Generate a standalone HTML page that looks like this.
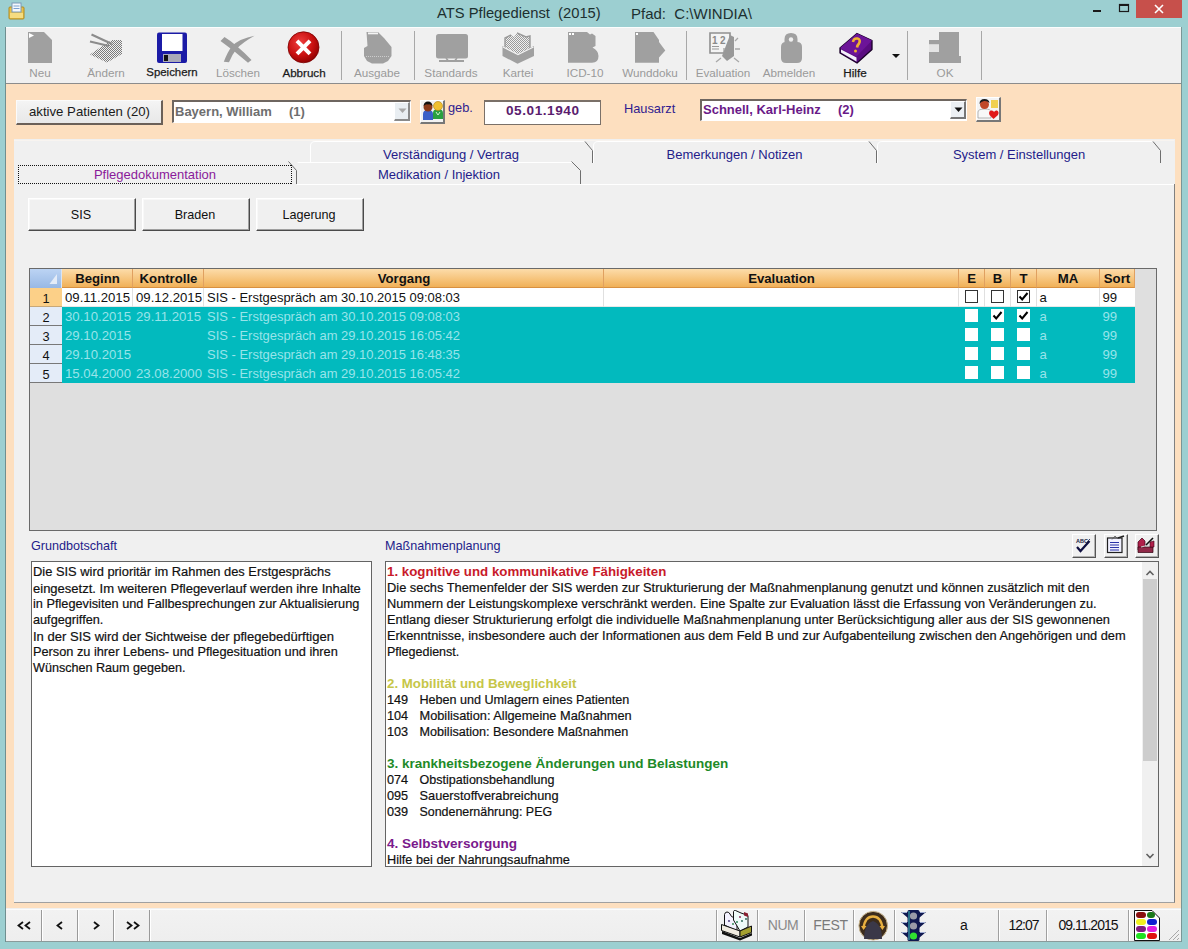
<!DOCTYPE html>
<html><head><meta charset="utf-8">
<style>
*{margin:0;padding:0;box-sizing:border-box}
html,body{width:1188px;height:949px;overflow:hidden}
body{background:#9ccfd1;font-family:"Liberation Sans",sans-serif;position:relative;color:#000}
.a{position:absolute}
.t{position:absolute;white-space:pre;line-height:1}
#title{left:0;top:0;width:1188px;height:27px;background:#9ccfd1}
#toolbar{left:6px;top:27px;width:1175px;height:57px;background:#f0f0f0;border-bottom:1px solid #8c8c8c}
#peach{left:6px;top:84px;width:1175px;height:824px;background:#fddfbf}
#page{left:14px;top:184px;width:1161px;height:719px;background:#f0f0f0;border-right:1px solid #808080;border-bottom:1px solid #a0a0a0}
#tabarea{left:14px;top:139px;width:1161px;height:45px;background:#f0f0f0}
#status{left:6px;top:908px;width:1175px;height:34px;background:#f0f0f0}
.tl{font-size:11.7px;color:#9a9a9a;text-align:center;width:66px}
.tl.on{color:#1a1a1a}
.m{font-size:12.95px;color:#111;-webkit-text-stroke:0.2px #111}
.btn{background:#f0f0f0;border-top:1px solid #fff;border-left:1px solid #fff;border-right:1px solid #4a4a4a;border-bottom:1px solid #4a4a4a;box-shadow:inset -1px -1px 0 #a0a0a0, inset 1px 1px 0 #f8f8f8}
.sep{position:absolute;top:31px;width:1px;height:49px;background:#b4b4b4;border-right:1px solid #fff}
</style></head><body>
<!-- title bar -->
<div id="title" class="a"></div>
<div class="t" style="left:437px;top:6px;font-size:14.75px;color:#1c3030">ATS Pflegedienst  (2015)</div>
<div class="t" style="left:631px;top:6px;font-size:15px;color:#1c3030">Pfad:  C:\WINDIA\</div>
<div class="a" style="left:1136px;top:0;width:46px;height:18px;background:#c7504b"></div>

<div id="toolbar" class="a"></div>
<div id="peach" class="a"></div>
<div id="tabarea" class="a"></div>
<div id="page" class="a"></div>
<div id="status" class="a"></div>


<!-- patient row -->
<div class="a" style="left:16px;top:100px;width:147px;height:25px;background:linear-gradient(#f4f4f4,#e8e8e8);border-top:1px solid #fbfbfb;border-left:1px solid #fbfbfb;border-right:2px solid #6b6058;border-bottom:2px solid #6b6058"></div>
<div class="t" style="left:29px;top:105px;font-size:13.2px;color:#1a1a1a">aktive Patienten (20)</div>
<div class="a" style="left:172px;top:100px;width:239px;height:23px;background:#fff;border-top:2px solid #6e6660;border-left:2px solid #6e6660;border-right:1px solid #fff;border-bottom:1px solid #fff"></div>
<div class="a" style="left:394px;top:102px;width:16px;height:19px;background:#e9eef2;border-right:2px solid #8a8a8a;border-bottom:2px solid #8a8a8a;border-top:1px solid #fff;border-left:1px solid #fff"></div>
<svg class="a" style="left:398px;top:108px" width="9" height="6"><path d="M0.5,0.5 H8.5 L4.5,5 Z" fill="#a8a8a8"/></svg>
<div class="t" style="left:175px;top:105px;font-size:13px;font-weight:bold;color:#6e6e6e">Bayern, William</div>
<div class="t" style="left:289px;top:105px;font-size:13px;font-weight:bold;color:#6e6e6e">(1)</div>
<!-- icon button 1 -->
<div class="a" style="left:420px;top:100px;width:25px;height:24px;background:#f2f2f2;border-right:2px solid #777;border-bottom:2px solid #777;border-top:1px solid #fff;border-left:1px solid #fff"></div>
<svg class="a" style="left:420px;top:100px" width="25" height="24" viewBox="0 0 25 24">
 <path d="M3,14 Q3,10 8,10 Q13,10 13,14 V20 H3 Z" fill="#3a5fc8"/>
 <circle cx="8" cy="7" r="4.5" fill="#8a3a1a"/>
 <path d="M3.5,6 Q4,1.5 8,1.5 Q12,1.5 12.5,6 Q10,3.5 8,4.5 Q6,3.5 3.5,6Z" fill="#111"/>
 <path d="M13,13 Q13,9 18,9 Q23,9 23,13 V19 H13 Z" fill="#2aa040"/>
 <circle cx="18" cy="6" r="4.5" fill="#f0c030" stroke="#b08010" stroke-width="0.6"/>
 <path d="M16,12 L18,15 L20,12" stroke="#d0f0d0" stroke-width="1" fill="none"/>
</svg>
<div class="t" style="left:448px;top:102px;font-size:12.8px;color:#301c90">geb.</div>
<!-- date -->
<div class="a" style="left:484px;top:100px;width:117px;height:25px;background:#fff;border:1px solid #7a7068;border-top:2px solid #7a7068"></div>
<div class="t" style="left:484px;top:104px;width:117px;text-align:center;font-size:13.6px;letter-spacing:0.55px;text-indent:0.55px;font-weight:bold;color:#5a1c6e">05.01.1940</div>
<div class="t" style="left:624px;top:103px;font-size:12.8px;color:#301c90">Hausarzt</div>
<!-- combo 2 -->
<div class="a" style="left:700px;top:99px;width:267px;height:22px;background:#fff;border-top:2px solid #6e6660;border-left:2px solid #6e6660;border-right:1px solid #fff;border-bottom:1px solid #fff"></div>
<div class="a" style="left:950px;top:101px;width:16px;height:18px;background:#ecf0f4;border-right:2px solid #777;border-bottom:2px solid #777;border-top:1px solid #fff;border-left:1px solid #fff"></div>
<svg class="a" style="left:954px;top:107px" width="9" height="6"><path d="M0.5,0.5 H8.5 L4.5,5 Z" fill="#111"/></svg>
<div class="t" style="left:703px;top:103px;font-size:13px;font-weight:bold;color:#6a1a88">Schnell, Karl-Heinz</div>
<div class="t" style="left:838px;top:103px;font-size:13px;font-weight:bold;color:#6a1a88">(2)</div>
<!-- icon button 2 -->
<div class="a" style="left:976px;top:97px;width:25px;height:25px;background:#f4f4f4;border-right:2px solid #777;border-bottom:2px solid #777;border-top:1px solid #fff;border-left:1px solid #fff"></div>
<svg class="a" style="left:976px;top:97px" width="25" height="25" viewBox="0 0 25 25">
 <rect x="15" y="3" width="7" height="8" fill="#f0d050"/>
 <path d="M2,21 V15 Q2,12 9,12 Q15,12 15,15 V21 Z" fill="#f8f8f8" stroke="#999" stroke-width="0.7"/>
 <circle cx="8.5" cy="7.5" r="4.5" fill="#c04828"/>
 <path d="M3.5,7 Q3.5,2 8.5,2 Q13,2 13.5,6 Q11,3.5 8,4 Q5,4.5 3.5,7Z" fill="#1a1a1a"/>
 <path d="M13,16 Q13,13 16,13.5 Q18,14 18,15 Q19,13 21,13.5 Q23.5,14.5 22,18 L17.5,22 L13.5,18 Z" fill="#e01818"/>
</svg>

<!-- toolbar -->
<div class="a" style="left:6px;top:27px;width:1175px;height:1px;background:#fbfdfd"></div>
<div class="a" style="left:5px;top:27px;width:1px;height:915px;background:#6f8f90"></div>
<div class="a" style="left:1181px;top:27px;width:1px;height:915px;background:#7a9696"></div>
<svg class="a" style="left:0;top:0" width="1188" height="84" viewBox="0 0 1188 84">
 <defs>
  <pattern id="dith2" width="2" height="2" patternUnits="userSpaceOnUse"><rect width="1" height="1" fill="#7a7a7a"/><rect x="1" y="1" width="1" height="1" fill="#7a7a7a"/></pattern>
  <pattern id="dith" width="2" height="2" patternUnits="userSpaceOnUse"><rect width="1" height="1" fill="#9a9a9a"/><rect x="1" y="1" width="1" height="1" fill="#9a9a9a"/></pattern>
  <radialGradient id="redg" cx="0.4" cy="0.35" r="0.7"><stop offset="0" stop-color="#f04040"/><stop offset="0.6" stop-color="#c81010"/><stop offset="1" stop-color="#8a0000"/></radialGradient>
 </defs>
 <!-- title icon -->
 <rect x="9" y="7" width="15" height="12" rx="1" fill="#e8c04a" stroke="#b08a20" stroke-width="1"/>
 <rect x="12" y="3" width="9" height="9" fill="#f4f8fc" stroke="#7a9ab8" stroke-width="1"/>
 <line x1="13.5" y1="6" x2="19.5" y2="6" stroke="#7aa0d0"/><line x1="13.5" y1="8.5" x2="19.5" y2="8.5" stroke="#7aa0d0"/>
 <rect x="10" y="13" width="13" height="5" fill="#f6dc80"/>
 <!-- min max close -->
 <rect x="1093" y="10" width="8" height="2" fill="#1a1a1a"/>
 <rect x="1119.5" y="4.5" width="9" height="7" fill="none" stroke="#1a1a1a" stroke-width="1.2"/>
 <rect x="1119" y="4" width="10" height="2" fill="#1a1a1a"/>
 <path d="M1155,5 L1163,13 M1163,5 L1155,13" stroke="#fff" stroke-width="1.6"/>
 <!-- Neu -->
 <path d="M28,32 H44 L52,40 V63 H28 Z" fill="#a0a0a0"/>
 <path d="M29,33 L34,35.5 L29,38 Z" fill="#fff"/>
 <!-- Aendern -->
 <path d="M90,54.5 L101,47 L112,40 H122 V54 L107,62.5 Z" fill="url(#dith2)"/>
 <path d="M91.5,34.5 L112,44 M90,41.5 L109,46" stroke="#8c8c8c" stroke-width="2.2"/>
 <!-- Speichern floppy -->
 <rect x="157" y="32.5" width="30" height="30.5" rx="2" fill="#1b1ba6"/>
 <rect x="162" y="34" width="20.5" height="17" fill="#fff"/>
 <rect x="163" y="54" width="18" height="8" fill="#a9a9b8"/>
 <rect x="164" y="55" width="4" height="6" fill="#111"/>
 <!-- Loeschen X -->
 <path d="M220.5,41 L224.5,37 Q236,44 251.5,60 L248,62.8 Q234,50.5 220.5,41 Z" fill="#9c9c9c"/>
 <path d="M254.5,35.8 Q240,38.5 232,46 Q227.5,52 223.8,61.8 L229,62.2 Q232.5,54 236.5,49 Q242.5,42.5 254.5,35.8 Z" fill="#9c9c9c"/>
 <!-- Abbruch -->
 <circle cx="303.5" cy="47.3" r="15.5" fill="url(#redg)" stroke="#7a0000" stroke-width="0.8"/>
 <path d="M297,40.8 L310,53.8 M310,40.8 L297,53.8" stroke="#fff" stroke-width="4"/>
 <!-- separators -->
 <rect x="341" y="31" width="1" height="49" fill="#a8a8a8"/>
 <rect x="414" y="31" width="1" height="49" fill="#a8a8a8"/>
 <rect x="686" y="31" width="1" height="49" fill="#a8a8a8"/>
 <rect x="907" y="31" width="1" height="49" fill="#a8a8a8"/>
 <rect x="981" y="31" width="1" height="49" fill="#a8a8a8"/>
 <!-- Ausgabe -->
 <path d="M366.5,32 H378 L384,38 L391.5,47 V56 L388,61 L383,63.5 H372 L367,61 L364,56 V48 L367.5,46 Z" fill="#a0a0a0"/>
 <rect x="368" y="32.5" width="10" height="1.8" fill="#f4f4f4"/>
 <path d="M366,56.5 H390" stroke="#d8d8d8" stroke-width="0.8" stroke-dasharray="1 1"/>
 <!-- Standards -->
 <rect x="436" y="34" width="32" height="24.5" rx="2.5" fill="#a0a0a0"/>
 <rect x="439" y="60" width="25" height="2" fill="#a0a0a0"/>
 <path d="M446,58 L448,60.5 M457,58 L455,60.5" stroke="#a0a0a0" stroke-width="1.6"/>
 <!-- Kartei -->
 <path d="M502.5,46 V56 L517.5,63.8 L534,56 V46 L517.5,54 Z" fill="#a0a0a0"/>
 <path d="M505,48 V38 L511,35 L514,37 L517,33 L526,37 L530,36 V49 L518,55 Z" fill="url(#dith)"/>
 <path d="M505,48 V38 L511,35 M517,33 L526,37 L530,36 V49" stroke="#9a9a9a" stroke-width="1.4" fill="none"/>
 <path d="M503,47 L518,54.5 L533.5,47" stroke="#f4f4f4" stroke-width="1.2" fill="none"/>
 <!-- ICD-10 -->
 <path d="M568,32 H587 L590,34.5 L592,33.5 L595.5,36 V46 L592.5,47.5 Q598.5,50.5 598.5,56 Q598.5,62.8 592,62.8 H568 Z" fill="#a0a0a0"/>
 <rect x="569" y="33" width="2" height="2" fill="#fff"/><rect x="572" y="33" width="2" height="2" fill="#fff"/>
 <!-- Wunddoku -->
 <path d="M635,32 H653.5 L659,40 V42 L665.3,50.5 L659,57.5 V62.8 H635 Z" fill="#a0a0a0"/>
 <rect x="636" y="33" width="2" height="2" fill="#fff"/>
 <!-- Evaluation -->
 <rect x="709.5" y="33" width="24" height="29" fill="none"/>
 <path d="M710,33 H730 V53 H710 Z" fill="#f4f4f4" stroke="#909090" stroke-width="1.6"/>
 <path d="M730,35 L734,37 V56 L727,61 L722,56" fill="#989898"/>
 <text x="712" y="44" font-family="Liberation Sans" font-weight="bold" font-size="10" fill="#8a8a8a">1</text>
 <text x="720" y="44" font-family="Liberation Sans" font-weight="bold" font-size="10" fill="#8a8a8a">2</text>
 <path d="M712,46.5 H719 M712,49 H719 M724,48 V55" stroke="#9a9a9a" stroke-width="1.2"/>
 <path d="M716,62 L721,58 M739,62 L734,58 M735,49 H740 M735,41 L738,38" stroke="#a8a8a8" stroke-width="1.3"/>
 <!-- Abmelden lock -->
 <path d="M784.5,45 V39 Q784.5,33 791,33 Q797.5,33 797.5,39 V45 Z" fill="#a0a0a0"/>
 <circle cx="791" cy="39.5" r="2.2" fill="#f0f0f0"/>
 <path d="M781,47 Q781,42 786,42 H797 Q802,42 802,47 V58 Q802,63 797,63 H786 Q781,63 781,58 Z" fill="#a0a0a0"/>
 <!-- Hilfe book -->
 <path d="M840,48 L857,33.5 L872,40.5 V49.5 L857,63 L840,53 Z" fill="#5a0c80" stroke="#1a0028" stroke-width="1.3" stroke-linejoin="round"/>
 <path d="M841,49.5 L856.5,57.5 V61.5 L841,52.5 Z" fill="#f4f0fa"/>
 <path d="M840,48 L857,33.5 L872,40.5 L856.5,56.5 Z" fill="#6c1498"/>
 <path d="M853,42 Q853.5,38 857.5,38.5 Q861,39.5 859,43.5 Q857.5,45 857,47.5" stroke="#f0b030" stroke-width="2.6" fill="none"/>
 <circle cx="855.5" cy="51" r="1.5" fill="#f0b030"/>
 <path d="M892,54 H900 L896,58 Z" fill="#111"/>
 <!-- OK -->
 <path d="M939,32 H959 V56 H961 V63 H929 V52 H939 V44.5 H929 V40 H939 Z" fill="#a0a0a0"/>
 <rect x="929" y="44.5" width="10" height="7.5" fill="#e4e4e4"/>
</svg>
<div class="t tl" style="left:7px;top:67px">Neu</div>
<div class="t tl" style="left:73px;top:67px">Ändern</div>
<div class="t tl on" style="left:139px;top:67px;font-size:11.4px;-webkit-text-stroke:0.25px #1a1a1a">Speichern</div>
<div class="t tl" style="left:205px;top:67px">Löschen</div>
<div class="t tl on" style="left:271px;top:67px;font-size:11.6px;-webkit-text-stroke:0.25px #1a1a1a">Abbruch</div>
<div class="t tl" style="left:344px;top:67px">Ausgabe</div>
<div class="t tl" style="left:418px;top:67px">Standards</div>
<div class="t tl" style="left:485px;top:67px">Kartei</div>
<div class="t tl" style="left:552px;top:67px">ICD-10</div>
<div class="t tl" style="left:617px;top:67px">Wunddoku</div>
<div class="t tl" style="left:690px;top:67px">Evaluation</div>
<div class="t tl" style="left:756px;top:67px">Abmelden</div>
<div class="t tl on" style="left:822px;top:67px;font-size:11.7px;-webkit-text-stroke:0.25px #1a1a1a">Hilfe</div>
<div class="t tl" style="left:912px;top:67px">OK</div>

<!-- PAGE START -->
<!-- tabs -->
<svg class="a" style="left:0;top:130px" width="1188" height="60" viewBox="0 130 1188 60">
 <rect x="14" y="140" width="1160" height="1" fill="#f8f4f0"/>
 <path d="M310.5,163 V146 Q310.5,141.5 315,141.5 H584.5" stroke="#ffffff" stroke-width="1" fill="none"/>
 <path d="M585,141.5 L592.5,150.5 V163" stroke="#6e6e6e" stroke-width="1" fill="none"/>
 <path d="M593.5,163 V146 Q593.5,141.5 598,141.5 H868.5" stroke="#ffffff" stroke-width="1" fill="none"/>
 <path d="M869,141.5 L876.5,150.5 V163" stroke="#6e6e6e" stroke-width="1" fill="none"/>
 <path d="M877.5,163 V146 Q877.5,141.5 882,141.5 H1152.5" stroke="#ffffff" stroke-width="1" fill="none"/>
 <path d="M1153,141.5 L1160.5,150.5 V163" stroke="#6e6e6e" stroke-width="1" fill="none"/>
 <path d="M297.5,162.5 H572" stroke="#ffffff" stroke-width="1"/>
 <path d="M571.5,161.5 L580.5,170.5 V184" stroke="#6e6e6e" stroke-width="1" fill="none"/>
 <path d="M288.5,161.5 L296.5,170.5 V184" stroke="#6e6e6e" stroke-width="1" fill="none"/>
 <rect x="297" y="184" width="877" height="1" fill="#ffffff"/>
</svg>
<div class="a" style="left:18px;top:165px;width:274px;height:1px;background:repeating-linear-gradient(90deg,#111 0 1px,transparent 1px 2px)"></div>
<div class="a" style="left:18px;top:183px;width:274px;height:1px;background:repeating-linear-gradient(90deg,#111 0 1px,transparent 1px 2px)"></div>
<div class="a" style="left:18px;top:165px;width:1px;height:19px;background:repeating-linear-gradient(180deg,#111 0 1px,transparent 1px 2px)"></div>
<div class="a" style="left:291px;top:165px;width:1px;height:19px;background:repeating-linear-gradient(180deg,#111 0 1px,transparent 1px 2px)"></div>
<div class="t" style="left:301px;top:147.7px;width:300px;text-align:center;font-size:13px;color:#241c8a">Verständigung / Vertrag</div>
<div class="t" style="left:584.5px;top:147.7px;width:300px;text-align:center;font-size:13px;color:#241c8a">Bemerkungen / Notizen</div>
<div class="t" style="left:869px;top:147.7px;width:300px;text-align:center;font-size:13px;color:#241c8a">System / Einstellungen</div>
<div class="t" style="left:5px;top:167.7px;width:300px;text-align:center;font-size:13px;color:#8a1a9a">Pflegedokumentation</div>
<div class="t" style="left:289px;top:167.7px;width:300px;text-align:center;font-size:13px;color:#241c8a">Medikation / Injektion</div>
<div class="a btn" style="left:28px;top:198px;width:108px;height:33px"></div>
<div class="t" style="left:28px;top:209.3px;width:106px;text-align:center;font-size:12.6px;color:#111">SIS</div>
<div class="a btn" style="left:142px;top:198px;width:108px;height:33px"></div>
<div class="t" style="left:142px;top:209.3px;width:106px;text-align:center;font-size:12.6px;color:#111">Braden</div>
<div class="a btn" style="left:256px;top:198px;width:108px;height:33px"></div>
<div class="t" style="left:256px;top:209.3px;width:106px;text-align:center;font-size:12.6px;color:#111">Lagerung</div>
<div class="a" style="left:29px;top:268px;width:1128px;height:263px;background:#dfdfdf;border:1px solid #6a6a6a"></div>
<div class="a" style="left:30px;top:269px;width:32px;height:19px;background:linear-gradient(#bcd4f4,#98b8e4);border-right:1px solid #d8e4f4"></div>
<svg class="a" style="left:30px;top:269px" width="32" height="19"><path d="M27,5 V15 H19.5 Z" fill="#e4ecf8"/></svg>
<div class="a" style="left:62px;top:269px;width:71px;height:19px;background:linear-gradient(#fcdcaa,#f6c278 60%,#f0b058);border-right:1px solid #e0a060;border-bottom:1px solid #d89040"></div>
<div class="t" style="left:62px;top:272.4px;width:71px;text-align:center;font-size:13.2px;font-weight:bold;color:#111">Beginn</div>
<div class="a" style="left:133px;top:269px;width:71px;height:19px;background:linear-gradient(#fcdcaa,#f6c278 60%,#f0b058);border-right:1px solid #e0a060;border-bottom:1px solid #d89040"></div>
<div class="t" style="left:133px;top:272.4px;width:71px;text-align:center;font-size:13.2px;font-weight:bold;color:#111">Kontrolle</div>
<div class="a" style="left:204px;top:269px;width:400px;height:19px;background:linear-gradient(#fcdcaa,#f6c278 60%,#f0b058);border-right:1px solid #e0a060;border-bottom:1px solid #d89040"></div>
<div class="t" style="left:204px;top:272.4px;width:400px;text-align:center;font-size:13.2px;font-weight:bold;color:#111">Vorgang</div>
<div class="a" style="left:604px;top:269px;width:355px;height:19px;background:linear-gradient(#fcdcaa,#f6c278 60%,#f0b058);border-right:1px solid #e0a060;border-bottom:1px solid #d89040"></div>
<div class="t" style="left:604px;top:272.4px;width:355px;text-align:center;font-size:13.2px;font-weight:bold;color:#111">Evaluation</div>
<div class="a" style="left:959px;top:269px;width:25.5px;height:19px;background:linear-gradient(#fcdcaa,#f6c278 60%,#f0b058);border-right:1px solid #e0a060;border-bottom:1px solid #d89040"></div>
<div class="t" style="left:959px;top:272.4px;width:25.5px;text-align:center;font-size:13.2px;font-weight:bold;color:#111">E</div>
<div class="a" style="left:984.5px;top:269px;width:26.0px;height:19px;background:linear-gradient(#fcdcaa,#f6c278 60%,#f0b058);border-right:1px solid #e0a060;border-bottom:1px solid #d89040"></div>
<div class="t" style="left:984.5px;top:272.4px;width:26.0px;text-align:center;font-size:13.2px;font-weight:bold;color:#111">B</div>
<div class="a" style="left:1010.5px;top:269px;width:26.0px;height:19px;background:linear-gradient(#fcdcaa,#f6c278 60%,#f0b058);border-right:1px solid #e0a060;border-bottom:1px solid #d89040"></div>
<div class="t" style="left:1010.5px;top:272.4px;width:26.0px;text-align:center;font-size:13.2px;font-weight:bold;color:#111">T</div>
<div class="a" style="left:1036.5px;top:269px;width:63.0px;height:19px;background:linear-gradient(#fcdcaa,#f6c278 60%,#f0b058);border-right:1px solid #e0a060;border-bottom:1px solid #d89040"></div>
<div class="t" style="left:1036.5px;top:272.4px;width:63.0px;text-align:center;font-size:13.2px;font-weight:bold;color:#111">MA</div>
<div class="a" style="left:1099.5px;top:269px;width:35.0px;height:19px;background:linear-gradient(#fcdcaa,#f6c278 60%,#f0b058);border-right:1px solid #e0a060;border-bottom:1px solid #d89040"></div>
<div class="t" style="left:1099.5px;top:272.4px;width:35.0px;text-align:center;font-size:13.2px;font-weight:bold;color:#111">Sort</div>
<div class="a" style="left:30px;top:288px;width:32px;height:19px;background:#fcd088;border-bottom:1px solid #c8a878"></div>
<div class="t" style="left:30px;top:293.3px;width:32px;text-align:center;font-size:12.8px;color:#111">1</div>
<div class="a" style="left:62px;top:288px;width:1073px;height:19px;background:#ffffff;border-bottom:1px solid #e8e8e8"></div>
<div class="a" style="left:132px;top:288px;width:1px;height:19px;background:#e0e0e0"></div>
<div class="a" style="left:203px;top:288px;width:1px;height:19px;background:#e0e0e0"></div>
<div class="a" style="left:603px;top:288px;width:1px;height:19px;background:#e0e0e0"></div>
<div class="a" style="left:958px;top:288px;width:1px;height:19px;background:#e0e0e0"></div>
<div class="a" style="left:983.5px;top:288px;width:1px;height:19px;background:#e0e0e0"></div>
<div class="a" style="left:1009.5px;top:288px;width:1px;height:19px;background:#e0e0e0"></div>
<div class="a" style="left:1035.5px;top:288px;width:1px;height:19px;background:#e0e0e0"></div>
<div class="a" style="left:1098.5px;top:288px;width:1px;height:19px;background:#e0e0e0"></div>
<div class="t" style="left:65px;top:290.9px;font-size:13.2px;color:#111">09.11.2015</div>
<div class="t" style="left:136px;top:290.9px;font-size:13.2px;color:#111">09.12.2015</div>
<div class="t" style="left:207px;top:291.1px;font-size:12.98px;color:#111">SIS - Erstgespräch am 30.10.2015 09:08:03</div>
<div class="t" style="left:1039.5px;top:290.9px;font-size:13.2px;color:#111">a</div>
<div class="t" style="left:1102.5px;top:290.9px;font-size:13.2px;color:#111">99</div>
<div class="a" style="left:965.0px;top:290px;width:13px;height:13px;background:#fff;border:1px solid #333"></div>
<div class="a" style="left:991.0px;top:290px;width:13px;height:13px;background:#fff;border:1px solid #333"></div>
<div class="a" style="left:1017.0px;top:290px;width:13px;height:13px;background:#fff;border:1px solid #333"></div>
<svg class="a" style="left:1017.0px;top:290px" width="13" height="13"><path d="M2.5,6.5 L5.2,9.5 L10.5,3" stroke="#000" stroke-width="2" fill="none"/></svg>
<div class="a" style="left:30px;top:307px;width:32px;height:19px;background:#e4ecf8;border-bottom:1px solid #787878"></div>
<div class="t" style="left:30px;top:312.3px;width:32px;text-align:center;font-size:12.8px;color:#111">2</div>
<div class="a" style="left:62px;top:307px;width:1073px;height:19px;background:#02babe;"></div>
<div class="t" style="left:65px;top:309.9px;font-size:13.2px;color:#98e4ea">30.10.2015</div>
<div class="t" style="left:136px;top:309.9px;font-size:13.2px;color:#98e4ea">29.11.2015</div>
<div class="t" style="left:207px;top:310.1px;font-size:12.98px;color:#98e4ea">SIS - Erstgespräch am 30.10.2015 09:08:03</div>
<div class="t" style="left:1039.5px;top:309.9px;font-size:13.2px;color:#98e4ea">a</div>
<div class="t" style="left:1102.5px;top:309.9px;font-size:13.2px;color:#98e4ea">99</div>
<div class="a" style="left:965.0px;top:309px;width:13px;height:13px;background:#fff"></div>
<div class="a" style="left:991.0px;top:309px;width:13px;height:13px;background:#fff"></div>
<svg class="a" style="left:991.0px;top:309px" width="13" height="13"><path d="M2.5,6.5 L5.2,9.5 L10.5,3" stroke="#000" stroke-width="2" fill="none"/></svg>
<div class="a" style="left:1017.0px;top:309px;width:13px;height:13px;background:#fff"></div>
<svg class="a" style="left:1017.0px;top:309px" width="13" height="13"><path d="M2.5,6.5 L5.2,9.5 L10.5,3" stroke="#000" stroke-width="2" fill="none"/></svg>
<div class="a" style="left:30px;top:326px;width:32px;height:19px;background:#e4ecf8;border-bottom:1px solid #787878"></div>
<div class="t" style="left:30px;top:331.3px;width:32px;text-align:center;font-size:12.8px;color:#111">3</div>
<div class="a" style="left:62px;top:326px;width:1073px;height:19px;background:#02babe;"></div>
<div class="t" style="left:65px;top:328.9px;font-size:13.2px;color:#98e4ea">29.10.2015</div>
<div class="t" style="left:136px;top:328.9px;font-size:13.2px;color:#98e4ea"></div>
<div class="t" style="left:207px;top:329.1px;font-size:12.98px;color:#98e4ea">SIS - Erstgespräch am 29.10.2015 16:05:42</div>
<div class="t" style="left:1039.5px;top:328.9px;font-size:13.2px;color:#98e4ea">a</div>
<div class="t" style="left:1102.5px;top:328.9px;font-size:13.2px;color:#98e4ea">99</div>
<div class="a" style="left:965.0px;top:328px;width:13px;height:13px;background:#fff"></div>
<div class="a" style="left:991.0px;top:328px;width:13px;height:13px;background:#fff"></div>
<div class="a" style="left:1017.0px;top:328px;width:13px;height:13px;background:#fff"></div>
<div class="a" style="left:30px;top:345px;width:32px;height:19px;background:#e4ecf8;border-bottom:1px solid #787878"></div>
<div class="t" style="left:30px;top:350.3px;width:32px;text-align:center;font-size:12.8px;color:#111">4</div>
<div class="a" style="left:62px;top:345px;width:1073px;height:19px;background:#02babe;"></div>
<div class="t" style="left:65px;top:347.9px;font-size:13.2px;color:#98e4ea">29.10.2015</div>
<div class="t" style="left:136px;top:347.9px;font-size:13.2px;color:#98e4ea"></div>
<div class="t" style="left:207px;top:348.1px;font-size:12.98px;color:#98e4ea">SIS - Erstgespräch am 29.10.2015 16:48:35</div>
<div class="t" style="left:1039.5px;top:347.9px;font-size:13.2px;color:#98e4ea">a</div>
<div class="t" style="left:1102.5px;top:347.9px;font-size:13.2px;color:#98e4ea">99</div>
<div class="a" style="left:965.0px;top:347px;width:13px;height:13px;background:#fff"></div>
<div class="a" style="left:991.0px;top:347px;width:13px;height:13px;background:#fff"></div>
<div class="a" style="left:1017.0px;top:347px;width:13px;height:13px;background:#fff"></div>
<div class="a" style="left:30px;top:364px;width:32px;height:19px;background:#e4ecf8;border-bottom:1px solid #787878"></div>
<div class="t" style="left:30px;top:369.3px;width:32px;text-align:center;font-size:12.8px;color:#111">5</div>
<div class="a" style="left:62px;top:364px;width:1073px;height:19px;background:#02babe;"></div>
<div class="t" style="left:65px;top:366.9px;font-size:13.2px;color:#98e4ea">15.04.2000</div>
<div class="t" style="left:136px;top:366.9px;font-size:13.2px;color:#98e4ea">23.08.2000</div>
<div class="t" style="left:207px;top:367.1px;font-size:12.98px;color:#98e4ea">SIS - Erstgespräch am 29.10.2015 16:05:42</div>
<div class="t" style="left:1039.5px;top:366.9px;font-size:13.2px;color:#98e4ea">a</div>
<div class="t" style="left:1102.5px;top:366.9px;font-size:13.2px;color:#98e4ea">99</div>
<div class="a" style="left:965.0px;top:366px;width:13px;height:13px;background:#fff"></div>
<div class="a" style="left:991.0px;top:366px;width:13px;height:13px;background:#fff"></div>
<div class="a" style="left:1017.0px;top:366px;width:13px;height:13px;background:#fff"></div>
<div class="t" style="left:31px;top:540.3px;font-size:12.6px;color:#241c8a">Grundbotschaft</div>
<div class="t" style="left:385px;top:540.3px;font-size:12.6px;color:#241c8a">Maßnahmenplanung</div>
<div class="a" style="left:31px;top:561px;width:341px;height:306px;background:#fff;border:1px solid #646464"></div>
<div class="t m" style="left:33px;top:566.1px;font-size:12.88px">Die SIS wird prioritär im Rahmen des Erstgesprächs</div>
<div class="t m" style="left:33px;top:582.0px;font-size:13.03px">eingesetzt. Im weiteren Pflegeverlauf werden ihre Inhalte</div>
<div class="t m" style="left:33px;top:598.2px;font-size:12.74px">in Pflegevisiten und Fallbesprechungen zur Aktualisierung</div>
<div class="t m" style="left:33px;top:614.3px;font-size:12.69px">aufgegriffen.</div>
<div class="t m" style="left:33px;top:630.0px;font-size:13.05px">In der SIS wird der Sichtweise der pflegebedürftigen</div>
<div class="t m" style="left:33px;top:646.2px;font-size:12.76px">Person zu ihrer Lebens- und Pflegesituation und ihren</div>
<div class="t m" style="left:33px;top:662.3px;font-size:12.6px">Wünschen Raum gegeben.</div>
<div class="a" style="left:385px;top:561px;width:774px;height:306px;background:#fff;border:1px solid #646464;overflow:hidden"></div>
<div class="a" style="left:386px;top:562px;width:756px;height:304px;overflow:hidden">
<div class="t" style="left:1px;top:3.2px;font-size:13.31px;font-weight:bold;color:#c81a2a">1. kognitive und kommunikative Fähigkeiten</div>
<div class="t m" style="left:1px;top:19.6px;font-size:12.85px">Die sechs Themenfelder der SIS werden zur Strukturierung der Maßnahmenplanung genutzt und können zusätzlich mit den</div>
<div class="t m" style="left:1px;top:35.7px;font-size:12.77px">Nummern der Leistungskomplexe verschränkt werden. Eine Spalte zur Evaluation lässt die Erfassung von Veränderungen zu.</div>
<div class="t m" style="left:1px;top:51.6px;font-size:12.82px">Entlang dieser Strukturierung erfolgt die individuelle Maßnahmenplanung unter Berücksichtigung aller aus der SIS gewonnenen</div>
<div class="t m" style="left:1px;top:67.6px;font-size:12.82px">Erkenntnisse, insbesondere auch der Informationen aus dem Feld B und zur Aufgabenteilung zwischen den Angehörigen und dem</div>
<div class="t m" style="left:1px;top:83.9px;font-size:12.5px">Pflegedienst.</div>
<div class="t" style="left:1px;top:115.3px;font-size:13.28px;font-weight:bold;color:#c6c648">2. Mobilität und Beweglichkeit</div>
<div class="t m" style="left:1px;top:131.7px;font-size:12.7px">149</div>
<div class="t m" style="left:33.5px;top:131.8px;font-size:12.59px">Heben und Umlagern eines Patienten</div>
<div class="t m" style="left:1px;top:147.7px;font-size:12.7px">104</div>
<div class="t m" style="left:33.5px;top:147.7px;font-size:12.77px">Mobilisation: Allgemeine Maßnahmen</div>
<div class="t m" style="left:1px;top:163.7px;font-size:12.7px">103</div>
<div class="t m" style="left:33.5px;top:163.8px;font-size:12.62px">Mobilisation: Besondere Maßnahmen</div>
<div class="t" style="left:1px;top:195.1px;font-size:13.51px;font-weight:bold;color:#1e8a28">3. krankheitsbezogene Änderungen und Belastungen</div>
<div class="t m" style="left:1px;top:211.7px;font-size:12.7px">074</div>
<div class="t m" style="left:33.5px;top:211.9px;font-size:12.53px">Obstipationsbehandlung</div>
<div class="t m" style="left:1px;top:227.7px;font-size:12.7px">095</div>
<div class="t m" style="left:33.5px;top:227.7px;font-size:12.79px">Sauerstoffverabreichung</div>
<div class="t m" style="left:1px;top:243.7px;font-size:12.7px">039</div>
<div class="t m" style="left:33.5px;top:244.0px;font-size:12.43px">Sondenernährung: PEG</div>
<div class="t" style="left:1px;top:275.1px;font-size:13.52px;font-weight:bold;color:#7a1a8c">4. Selbstversorgung</div>
<div class="t m" style="left:1px;top:291.7px;font-size:12.71px">Hilfe bei der Nahrungsaufnahme</div>
</div>
<div class="a" style="left:1142px;top:562px;width:16px;height:304px;background:#f0f0f0"></div>
<div class="a" style="left:1143px;top:579px;width:14px;height:182px;background:#cdcdcd"></div>
<svg class="a" style="left:1142px;top:562px" width="16" height="304"><path d="M4.5,13 L8,9.5 L11.5,13" stroke="#606060" stroke-width="1.6" fill="none"/><path d="M4.5,292 L8,295.5 L11.5,292" stroke="#606060" stroke-width="1.6" fill="none"/></svg>
<div class="a" style="left:1071.5px;top:534px;width:24px;height:24px;background:#f0f0f0;border-top:1px solid #fff;border-left:1px solid #fff;border-right:1px solid #555;border-bottom:1px solid #555;box-shadow:inset -1px -1px 0 #b0b0b0"></div>
<div class="a" style="left:1103.5px;top:534px;width:24px;height:24px;background:#f0f0f0;border-top:1px solid #fff;border-left:1px solid #fff;border-right:1px solid #555;border-bottom:1px solid #555;box-shadow:inset -1px -1px 0 #b0b0b0"></div>
<div class="a" style="left:1134.5px;top:534px;width:24px;height:24px;background:#f0f0f0;border-top:1px solid #fff;border-left:1px solid #fff;border-right:1px solid #555;border-bottom:1px solid #555;box-shadow:inset -1px -1px 0 #b0b0b0"></div>
<svg class="a" style="left:1071px;top:534px" width="90" height="24" viewBox="1071 534 90 24">
 <text x="1076" y="542.5" font-family="Liberation Sans" font-weight="bold" font-size="5.5" fill="#202040">ABC</text>
 <path d="M1077,547 L1080.5,551 L1089.5,541" stroke="#101040" stroke-width="2.2" fill="none"/>
 <path d="M1086,543 L1090,539" stroke="#404060" stroke-width="1" fill="none"/>
 <rect x="1107.5" y="538" width="14.5" height="14.5" fill="#f0f0ff" stroke="#202020" stroke-width="1.2"/>
 <path d="M1110,542.5 H1119 M1110,545 H1119 M1110,547.5 H1119 M1110,550 H1119" stroke="#2830a8" stroke-width="1.1"/>
 <path d="M1112,539.5 L1115,536 L1118,539" stroke="#555" stroke-width="0.8" fill="none"/>
 <path d="M1118,538 L1124,536" stroke="#222" stroke-width="1.5"/>
 <path d="M1138,550 V542 L1142,538 L1145,541 V550 Z" fill="#b0204a" stroke="#400018" stroke-width="0.7"/>
 <path d="M1138,547 H1153 V552.5 H1138 Z" fill="#902848" stroke="#300010" stroke-width="0.7"/>
 <path d="M1141,547 L1149,545" stroke="#d0d0d0" stroke-width="1.2"/>
 <path d="M1146,545 L1153,538" stroke="#111" stroke-width="1.6"/>
 <path d="M1150,542 L1154,541 V547 H1150 Z" fill="#b0204a" stroke="#400018" stroke-width="0.6"/>
</svg>
<div class="a" style="left:6px;top:909px;width:1175px;height:33px;background:linear-gradient(#f2f2f2,#eeeeee)"></div>
<div class="a" style="left:6px;top:941px;width:1175px;height:1px;background:#8a9a9a"></div>
<div class="a" style="left:6px;top:909px;width:1175px;height:1px;background:#fcfcfc"></div>
<div class="a" style="left:41px;top:910px;width:1px;height:31px;background:#9a9a9a"></div>
<div class="a" style="left:42px;top:910px;width:1px;height:31px;background:#fff"></div>
<div class="a" style="left:77px;top:910px;width:1px;height:31px;background:#9a9a9a"></div>
<div class="a" style="left:78px;top:910px;width:1px;height:31px;background:#fff"></div>
<div class="a" style="left:113px;top:910px;width:1px;height:31px;background:#9a9a9a"></div>
<div class="a" style="left:114px;top:910px;width:1px;height:31px;background:#fff"></div>
<div class="a" style="left:149px;top:910px;width:1px;height:31px;background:#9a9a9a"></div>
<div class="a" style="left:150px;top:910px;width:1px;height:31px;background:#fff"></div>
<svg class="a" style="left:0;top:910px" width="160" height="30" viewBox="0 910 160 30">
 <path d="M23,922 L18.5,925.5 L23,929 M30,922 L25.5,925.5 L30,929" stroke="#111" stroke-width="1.8" fill="none"/>
 <path d="M62,922 L57.5,925.5 L62,929" stroke="#111" stroke-width="1.8" fill="none"/>
 <path d="M94,922 L98.5,925.5 L94,929" stroke="#111" stroke-width="1.8" fill="none"/>
 <path d="M127,922 L131.5,925.5 L127,929 M134,922 L138.5,925.5 L134,929" stroke="#111" stroke-width="1.8" fill="none"/>
</svg>
<div class="a" style="left:716px;top:910px;width:1px;height:31px;background:#a0a0a0"></div>
<div class="a" style="left:717px;top:910px;width:1px;height:31px;background:#fff"></div>
<div class="a" style="left:757px;top:910px;width:1px;height:31px;background:#a0a0a0"></div>
<div class="a" style="left:758px;top:910px;width:1px;height:31px;background:#fff"></div>
<div class="a" style="left:804px;top:910px;width:1px;height:31px;background:#a0a0a0"></div>
<div class="a" style="left:805px;top:910px;width:1px;height:31px;background:#fff"></div>
<div class="a" style="left:853px;top:910px;width:1px;height:31px;background:#a0a0a0"></div>
<div class="a" style="left:854px;top:910px;width:1px;height:31px;background:#fff"></div>
<div class="a" style="left:894px;top:910px;width:1px;height:31px;background:#a0a0a0"></div>
<div class="a" style="left:895px;top:910px;width:1px;height:31px;background:#fff"></div>
<div class="a" style="left:998px;top:910px;width:1px;height:31px;background:#a0a0a0"></div>
<div class="a" style="left:999px;top:910px;width:1px;height:31px;background:#fff"></div>
<div class="a" style="left:1046px;top:910px;width:1px;height:31px;background:#a0a0a0"></div>
<div class="a" style="left:1047px;top:910px;width:1px;height:31px;background:#fff"></div>
<div class="a" style="left:1128px;top:910px;width:1px;height:31px;background:#a0a0a0"></div>
<div class="a" style="left:1129px;top:910px;width:1px;height:31px;background:#fff"></div>
<div class="t" style="left:743px;top:918.1px;width:80px;text-align:center;font-size:14px;letter-spacing:-0.5px;color:#8a8a8a">NUM</div>
<div class="t" style="left:790.5px;top:918.1px;width:80px;text-align:center;font-size:14px;letter-spacing:-0.3px;color:#7a7a7a">FEST</div>
<div class="t" style="left:924px;top:918.1px;width:80px;text-align:center;font-size:14px;letter-spacing:0px;color:#111">a</div>
<div class="t" style="left:983.5px;top:918.1px;width:80px;text-align:center;font-size:14px;letter-spacing:-1px;color:#111">12:07</div>
<div class="t" style="left:1048px;top:918.1px;width:80px;text-align:center;font-size:14px;letter-spacing:-1px;color:#111">09.11.2015</div>
<svg class="a" style="left:700px;top:905px" width="488" height="44" viewBox="700 905 488 44">
 <!-- kartei box -->
 <path d="M724.5,925 V914.5 Q725,912 727,912 Q729,912 730,914 L731.5,916.5 L737,919 V931 Z" fill="#f4f2ff" stroke="#111" stroke-width="1"/>
 <path d="M733.5,920 V911.5 Q734,910 735.5,910.5 L741,913 L748,915.5 V927 L740,931 Z" fill="#eefaf8" stroke="#111" stroke-width="1"/>
 <path d="M744,912 L748,913.5 V917 L744,915.5 Z" fill="#8a2030"/>
 <circle cx="729" cy="921" r="0.9" fill="#403070"/><circle cx="733" cy="924" r="0.9" fill="#208040"/><circle cx="737" cy="922" r="0.9" fill="#208050"/>
 <circle cx="742" cy="921" r="0.9" fill="#206050"/><circle cx="746" cy="919" r="0.9" fill="#206050"/><circle cx="740" cy="917" r="0.9" fill="#802050"/>
 <path d="M721.5,924.5 L740,931 V937 L721.5,930.5 Z" fill="#f0ebe0" stroke="#111" stroke-width="1"/>
 <path d="M740,931 L751.5,926 V932.5 L740,937 Z" fill="#a4a030" stroke="#111" stroke-width="1"/>
 <path d="M722,931 L740,938 L752,933 V935.5 L740,940.5 L722,934 Z" fill="#111"/>
 <!-- dark circle -->
 <circle cx="873.2" cy="925.7" r="14.3" fill="#3c2c1c" stroke="#c8b48c" stroke-width="1"/>
 <path d="M864,939 Q864,924 873,921 Q882,924 882,939 Z" fill="#3a3848"/>
 <path d="M863.5,928 Q865,916.5 873,916.5 Q881,916.5 882.5,928" stroke="#e8b040" stroke-width="2.4" fill="none"/>
 <path d="M861,926 L863.5,930 L866.5,926 Z M879.5,926 L882.5,930 L885,926 Z" fill="#e8b040"/>
 <!-- traffic light -->
 <rect x="907.5" y="910" width="12" height="31" rx="1.5" fill="#101850"/>
 <path d="M901,912 H908 V918 Z M926,912 H919 V918 Z M901,922 H908 V928 Z M926,922 H919 V928 Z M901,932 H908 V938 Z M926,932 H919 V938 Z" fill="#101850"/>
 <path d="M902,912.5 H907 M920,912.5 H925 M902,922.5 H907 M920,922.5 H925 M902,932.5 H907 M920,932.5 H925" stroke="#c0d0f0" stroke-width="0.8"/>
 <rect x="908.5" y="911" width="1" height="29" fill="#40c0c0"/>
 <circle cx="913.5" cy="916" r="3.6" fill="#9a9aa8"/>
 <circle cx="913.5" cy="926" r="3.6" fill="#9a9aa8"/>
 <circle cx="913.5" cy="936" r="3.6" fill="#30e030"/>
 <!-- color doc -->
 <path d="M1134.5,910.5 H1152 L1159.5,918 V940.5 H1134.5 Z" fill="#fff" stroke="#111" stroke-width="1"/>
 <rect x="1136" y="912" width="10" height="6" rx="3" fill="#8a1010"/>
 <rect x="1147" y="912" width="8" height="6" rx="3" fill="#1a7a1a"/>
 <rect x="1136" y="919" width="10" height="6" rx="3" fill="#f0f020"/>
 <rect x="1147" y="919" width="10" height="6" rx="3" fill="#1020d0"/>
 <rect x="1136" y="926" width="10" height="6" rx="3" fill="#801a80"/>
 <rect x="1147" y="926" width="10" height="6" rx="3" fill="#e020e0"/>
 <rect x="1136" y="933" width="10" height="6" rx="3" fill="#20e020"/>
 <rect x="1147" y="933" width="10" height="6" rx="3" fill="#e01010"/>
 <!-- grip -->
 <path d="M1169,940 L1179,930 M1173,940 L1179,934 M1177,940 L1179,938" stroke="#a8a8a8" stroke-width="1"/>
</svg>
<!-- PAGE END -->
</body></html>
